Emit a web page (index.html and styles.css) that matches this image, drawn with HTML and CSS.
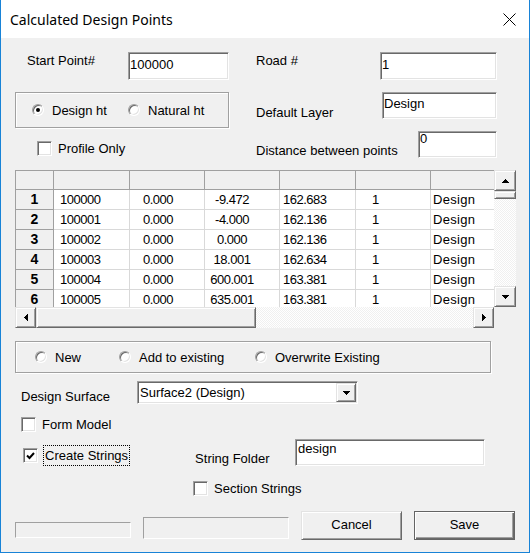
FILE: index.html
```html
<!DOCTYPE html>
<html>
<head>
<meta charset="utf-8">
<title>Calculated Design Points</title>
<link rel="stylesheet" href="styles.css">
</head>
<body>
<div class="window">
  <div class="titlebar">
    <span class="title">Calculated Design Points</span>
    <svg class="close" width="13" height="13" viewBox="0 0 13 13"><path d="M0.5 0.5L12.5 12.5M12.5 0.5L0.5 12.5" stroke="#000" stroke-width="1" fill="none"/></svg>
  </div>

  <div class="row row-a">
    <span class="lbl lbl-start">Start Point#</span>
    <div class="edit edit-start">100000</div>
    <span class="lbl lbl-road">Road #</span>
    <div class="edit edit-road">1</div>
  </div>

  <div class="row row-b">
    <div class="group group-ht">
      <div class="opt opt-design"><span class="radio on"></span><span>Design ht</span></div>
      <div class="opt"><span class="radio"></span><span>Natural ht</span></div>
    </div>
    <span class="lbl lbl-layer">Default Layer</span>
    <div class="edit edit-layer">Design</div>
  </div>

  <div class="row row-c">
    <div class="chk chk-profile"><span class="check"></span><span>Profile Only</span></div>
    <span class="lbl lbl-dist">Distance between points</span>
    <div class="edit edit-dist">0</div>
  </div>

  <div class="gridctl">
    <div class="table">
      <div class="c h"></div><div class="c h"></div><div class="c h"></div><div class="c h"></div><div class="c h"></div><div class="c h"></div><div class="c h"></div>

      <div class="c rh">1</div><div class="c c1">100000</div><div class="c c2">0.000</div><div class="c c3">-9.472</div><div class="c c4">162.683</div><div class="c c5">1</div><div class="c c6">Design</div>
      <div class="c rh">2</div><div class="c c1">100001</div><div class="c c2">0.000</div><div class="c c3">-4.000</div><div class="c c4">162.136</div><div class="c c5">1</div><div class="c c6">Design</div>
      <div class="c rh">3</div><div class="c c1">100002</div><div class="c c2">0.000</div><div class="c c3">0.000</div><div class="c c4">162.136</div><div class="c c5">1</div><div class="c c6">Design</div>
      <div class="c rh">4</div><div class="c c1">100003</div><div class="c c2">0.000</div><div class="c c3">18.001</div><div class="c c4">162.634</div><div class="c c5">1</div><div class="c c6">Design</div>
      <div class="c rh">5</div><div class="c c1">100004</div><div class="c c2">0.000</div><div class="c c3">600.001</div><div class="c c4">163.381</div><div class="c c5">1</div><div class="c c6">Design</div>
      <div class="c rh">6</div><div class="c c1">100005</div><div class="c c2">0.000</div><div class="c c3">635.001</div><div class="c c4">163.381</div><div class="c c5">1</div><div class="c c6">Design</div>
    </div>
    <div class="vscroll">
      <div class="raised sbtn vbtn"><svg width="7" height="4" viewBox="0 0 7 4"><path d="M3 0h1v1h1v1h1v1h1v1H0V3h1V2h1V1h1z"/></svg></div>
      <div class="raised vthumb"></div>
      <div class="track"></div>
      <div class="raised sbtn vbtn"><svg width="7" height="4" viewBox="0 0 7 4"><path d="M0 0h7v1H6v1H5v1H4v1H3V3H2V2H1V1H0z"/></svg></div>
    </div>
    <div class="hscroll">
      <div class="raised sbtn hbtn"><svg width="4" height="7" viewBox="0 0 4 7"><path d="M3 0h1v7H3V6H2V5H1V4H0V3h1V2h1V1h1z"/></svg></div>
      <div class="raised hthumb"></div>
      <div class="track"></div>
      <div class="raised sbtn hbtn"><svg width="4" height="7" viewBox="0 0 4 7"><path d="M0 0h1v1h1v1h1v1h1v1H3v1H2v1H1v1H0z"/></svg></div>
    </div>
    <div class="corner"></div>
  </div>

  <div class="group group-mode">
    <div class="opt opt-new"><span class="radio"></span><span>New</span></div>
    <div class="opt opt-add"><span class="radio"></span><span>Add to existing</span></div>
    <div class="opt"><span class="radio"></span><span>Overwrite Existing</span></div>
  </div>

  <div class="row row-surface">
    <span class="lbl lbl-surface">Design Surface</span>
    <div class="combo">
      <span class="combo-text">Surface2 (Design)</span>
      <div class="raised combo-btn"><svg width="7" height="4" viewBox="0 0 7 4"><path d="M0 0h7v1H6v1H5v1H4v1H3V3H2V2H1V1H0z"/></svg></div>
    </div>
  </div>

  <div class="row row-form">
    <div class="chk chk-form"><span class="check"></span><span>Form Model</span></div>
  </div>

  <div class="row row-create">
    <span class="check check-create"><svg width="9" height="8" viewBox="0 0 9 8"><path d="M1 3.5l2.5 2.5 4.5-5" stroke="#000" stroke-width="2" fill="none"/></svg></span>
    <span class="focus">Create Strings</span>
    <span class="lbl lbl-folder">String Folder</span>
    <div class="edit edit-folder">design</div>
  </div>

  <div class="row row-section">
    <div class="chk chk-section"><span class="check"></span><span>Section Strings</span></div>
  </div>

  <div class="row row-bottom">
    <div class="status status-1"></div>
    <div class="status status-2"></div>
    <div class="button btn-cancel">Cancel</div>
    <div class="button btn-save">Save</div>
  </div>
</div>
</body>
</html>
```
FILE: styles.css
```css
body {
  margin: 0;
}

.window {
  width: 530px;
  height: 553px;
  box-sizing: border-box;
  border: 1px solid #1883d7;
  border-top: none;
  background: #f0f0f0;
  font: 13px/15px "Liberation Sans", Arial, sans-serif;
  color: #000;
  overflow: hidden;
}

.titlebar {
  height: 38px;
  background: #fff;
  display: flex;
  align-items: flex-start;
}

.title {
  font: 14px/20px "Noto Sans", sans-serif;
  margin: 10px 0 0 9px;
  color: #000;
}

.close {
  margin: 13px 13px 0 auto;
}

.row {
  display: flex;
  align-items: flex-start;
}

.lbl {
  display: block;
  line-height: 15px;
  white-space: nowrap;
  flex: none;
}

/* sunken edit box */
.edit {
  box-sizing: border-box;
  background: #fff;
  border: 1px solid;
  border-color: #a0a0a0 #fff #fff #a0a0a0;
  box-shadow: inset 1px 1px #696969, inset -1px -1px #e3e3e3;
  padding: 0 0 0 1px;
  line-height: 15px;
  white-space: nowrap;
  overflow: hidden;
  flex: none;
}

/* row A */
.row-a { margin-top: 14px; height: 28px; }
.lbl-start { margin: 1px 0 0 26px; width: 101px; }
.edit-start { width: 101px; height: 28px; padding-top: 4px; }
.lbl-road { margin: 1px 0 0 27px; width: 124px; }
.edit-road { width: 117px; height: 28px; padding-top: 4px; }

/* row B */
.row-b { margin-top: 12px; height: 36px; }
.group {
  box-sizing: border-box;
  border: 1px solid #a0a0a0;
  box-shadow: inset 1px 1px #fff, 1px 1px #fff;
  display: flex;
  align-items: center;
  flex: none;
}
.group-ht { margin-left: 14px; width: 214px; height: 36px; padding-left: 16px; }
.opt {
  display: flex;
  align-items: center;
  gap: 8px;
  white-space: nowrap;
}
.opt-design { width: 96px; }
.lbl-layer { margin: 13px 0 0 27px; width: 126px; }
.edit-layer { width: 115px; height: 27px; padding-top: 3px; }

.radio {
  width: 12px;
  height: 12px;
  box-sizing: border-box;
  border-radius: 50%;
  border: 1px solid;
  border-color: #a0a0a0 #fff #fff #a0a0a0;
  box-shadow: inset 1px 1px #696969, inset -1px -1px #e3e3e3;
  background: #fff;
  display: flex;
  align-items: center;
  justify-content: center;
  flex: none;
}
.radio.on::after {
  content: "";
  width: 4px;
  height: 4px;
  border-radius: 50%;
  background: #000;
}

/* checkbox */
.chk {
  display: flex;
  align-items: center;
  gap: 6px;
  white-space: nowrap;
}
.check {
  width: 15px;
  height: 15px;
  box-sizing: border-box;
  border: 1px solid;
  border-color: #a0a0a0 #fff #fff #a0a0a0;
  box-shadow: inset 1px 1px #696969, inset -1px -1px #e3e3e3;
  background: #fff;
  flex: none;
  display: flex;
  align-items: center;
  justify-content: center;
}

/* row C */
.row-c { margin-top: 3px; height: 27px; }
.chk-profile { margin: 10px 0 0 36px; width: 219px; }
.lbl-dist { margin: 12px 0 0 0; width: 162px; }
.edit-dist { width: 79px; height: 27px; line-height: 13px; }

/* grid control */
.gridctl {
  display: grid;
  grid-template-columns: 479px 22px;
  grid-template-rows: 137px 21px;
  margin: 12px 0 0 14px;
  width: 501px;
}
.table {
  box-sizing: border-box;
  overflow: hidden;
  border-top: 1px solid #a0a0a0;
  border-left: 1px solid #a0a0a0;
  background: #fff;
  display: grid;
  grid-template-columns: 38px 76px 75px 75px 76px 75px 80px;
  grid-template-rows: 19px;
  grid-auto-rows: 20px;
  font: 13px/19px "Liberation Sans", Arial, sans-serif;
  letter-spacing: -0.5px;
}
.c {
  box-sizing: border-box;
  border-right: 1px solid #d9d9d9;
  border-bottom: 1px solid #d9d9d9;
  white-space: nowrap;
  overflow: hidden;
}
.h {
  background: #f0f0f0;
  border-color: #a0a0a0;
}
.rh {
  background: #f0f0f0;
  border-color: #a0a0a0;
  font-weight: bold;
  font-size: 14px;
  letter-spacing: 0;
  text-align: center;
}
.c1 { padding-left: 6px; }
.c2 { padding-left: 13px; }
.c3 { text-align: center; padding-right: 20px; }
.c4 { padding-left: 3px; }
.c5 { padding-left: 16px; }
.c6 { padding-left: 2px; letter-spacing: 0.3px; }

.raised {
  box-sizing: border-box;
  background: #f0f0f0;
  border: 1px solid;
  border-color: #e3e3e3 #696969 #696969 #e3e3e3;
  box-shadow: inset 1px 1px #fff, inset -1px -1px #a0a0a0;
}
.sbtn {
  display: flex;
  align-items: center;
  justify-content: center;
  flex: none;
}
.vscroll {
  display: flex;
  flex-direction: column;
}
.vbtn { height: 21px; }
.vthumb { height: 8px; flex: none; }
.track {
  flex: 1;
  background: repeating-conic-gradient(#f0f0f0 0 25%, #fff 0 50%) 0 0 / 2px 2px;
}
.hscroll {
  display: flex;
}
.hbtn { width: 21px; }
.hthumb { width: 220px; flex: none; }

/* mode group */
.group-mode {
  margin: 13px 0 0 14px;
  width: 476px;
  height: 32px;
  padding-left: 19px;
}
.opt-new { width: 84px; }
.opt-add { width: 136px; }

/* surface row */
.row-surface { margin-top: 8px; height: 23px; }
.lbl-surface { margin: 8px 0 0 20px; width: 116px; }
.combo {
  box-sizing: border-box;
  width: 221px;
  height: 23px;
  background: #fff;
  border: 1px solid;
  border-color: #a0a0a0 #fff #fff #a0a0a0;
  box-shadow: inset 1px 1px #696969, inset -1px -1px #e3e3e3;
  display: flex;
  align-items: center;
  flex: none;
}
.combo-text {
  padding-left: 2px;
  white-space: nowrap;
}
.combo-btn {
  margin: 0 1px 0 auto;
  width: 20px;
  height: 19px;
  display: flex;
  align-items: center;
  justify-content: center;
}

/* form model */
.row-form { margin-top: 13px; height: 16px; }
.chk-form { margin-left: 20px; }

/* create strings */
.row-create { margin-top: 6px; height: 27px; }
.check-create { margin: 9px 0 0 22px; }
.focus {
  margin: 6px 0 0 5px;
  border: 1px dotted #000;
  padding: 2px 1px;
  line-height: 15px;
  white-space: nowrap;
  flex: none;
}
.lbl-folder { margin: 12px 0 0 65px; width: 100px; }
.edit-folder { width: 190px; height: 27px; padding: 1px 0 0 2px; }

/* section strings */
.row-section { margin-top: 15px; height: 16px; }
.chk-section { margin-left: 192px; }

/* bottom row */
.row-bottom { margin-top: 14px; height: 29px; }
.status {
  box-sizing: border-box;
  border: 1px solid;
  border-color: #a0a0a0 #fff #fff #a0a0a0;
  flex: none;
}
.status-1 { margin: 11px 0 0 14px; width: 116px; height: 16px; }
.status-2 { margin: 6px 0 0 12px; width: 146px; height: 22px; }
.button {
  box-sizing: border-box;
  width: 101px;
  height: 29px;
  margin-left: 12px;
  background: #f0f0f0;
  display: flex;
  align-items: center;
  justify-content: center;
  padding-bottom: 2px;
  flex: none;
}
.btn-cancel {
  border: 1px solid;
  border-color: #e3e3e3 #696969 #696969 #e3e3e3;
  box-shadow: inset 1px 1px #fff, inset -1px -1px #a0a0a0;
}
.btn-save {
  border: 1px solid #646464;
  box-shadow: inset 1px 1px #fff, inset -1px -1px #696969, inset -2px -2px #a0a0a0;
}
```
